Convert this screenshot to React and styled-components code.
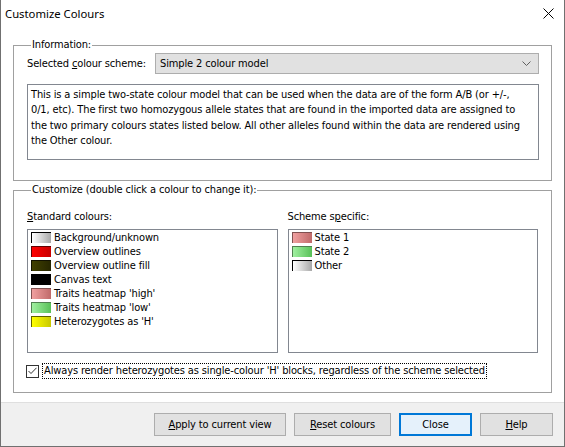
import React from 'react';
import styled, { createGlobalStyle } from 'styled-components';

const GlobalStyle = createGlobalStyle`
  html, body { margin: 0; padding: 0; background: #fff; }
  body {
    font-family: "DejaVu Sans Condensed", Tahoma, "Liberation Sans", sans-serif;
    font-size: 11px;
    letter-spacing: -0.13px;
    color: #000;
  }
  * { box-sizing: border-box; }
`;

const Window = styled.div`
  width: 565px;
  height: 447px;
  border: 1px solid #707070;
  border-top: none;
  background: #fff;
  display: flex;
  flex-direction: column;
`;

const TitleBar = styled.div`
  height: 30px;
  flex: none;
  display: flex;
  align-items: center;
  justify-content: space-between;
  padding: 0 10px 4px 4px;
`;

const Title = styled.div`
  font-family: "Noto Sans", "Open Sans", sans-serif;
  font-size: 11.3px;
  letter-spacing: 0;
`;

const Body = styled.div`
  flex: 1;
  padding: 8px 12px 9px 12px;
  display: flex;
  flex-direction: column;
  gap: 2px;
`;

const Group = styled.fieldset`
  margin: 0;
  padding: ${(p) => p.$pad};
  border: 1px solid #a0a0a0;
  min-width: 0;
`;

const Legend = styled.legend`
  margin-left: 4px;
  padding: 0 1px;
  line-height: 14px;
`;

const Row = styled.div`
  display: flex;
  align-items: center;
`;

const FieldLabel = styled.span`
  width: 128px;
  flex: none;
`;

const Combo = styled.div`
  flex: 1;
  height: 21px;
  border: 1px solid #adadad;
  background: #e1e1e1;
  display: flex;
  align-items: center;
  justify-content: space-between;
  padding: 0 7px 0 4px;
`;

const InfoText = styled.div`
  margin-top: 10px;
  height: 76px;
  border: 1px solid #828790;
  padding: 2px 3px;
  line-height: 15.4px;
  white-space: nowrap;
`;

const Columns = styled.div`
  display: grid;
  grid-template-columns: 1fr 1fr;
  column-gap: 10px;
`;

const Column = styled.div`
  display: flex;
  flex-direction: column;
`;

const ListLabel = styled.div`
  line-height: 14px;
  margin-bottom: 5px;
`;

const ListBox = styled.div`
  height: 124px;
  border: 1px solid #828790;
  background: #fff;
  padding: 0 3px;
`;

const Item = styled.div`
  height: 14px;
  display: flex;
  align-items: center;
  gap: 3px;
  white-space: nowrap;
`;

const Swatch = styled.span`
  width: 20px;
  height: 11px;
  flex: none;
  background: linear-gradient(to right, ${(p) => p.$from}, ${(p) => p.$to});
  border-left: 1px solid ${(p) => p.$edge};
  border-top: 1px solid ${(p) => p.$edge};
`;

const CheckRow = styled.div`
  margin-top: 11px;
  margin-left: -1px;
  display: flex;
  align-items: center;
  gap: 4px;
`;

const CheckBox = styled.span`
  width: 13px;
  height: 13px;
  border: 1px solid #333;
  background: #fff;
  display: flex;
  align-items: center;
  justify-content: center;
`;

const CheckLabel = styled.span`
  outline: 1px dotted #000;
  line-height: 14px;
  padding: 0 1px;
`;

const ButtonStrip = styled.div`
  height: 44px;
  flex: none;
  background: #f0f0f0;
  border-top: 1px solid #dfdfdf;
  display: flex;
  justify-content: flex-end;
  align-items: flex-start;
  gap: 8px;
  padding: 10px 11px 0 0;
`;

const Button = styled.div`
  width: ${(p) => p.$w}px;
  height: 23px;
  background: ${(p) => (p.$default ? '#e5f1fb' : '#e1e1e1')};
  border: ${(p) => (p.$default ? '2px solid #0078d7' : '1px solid #adadad')};
  display: flex;
  align-items: center;
  justify-content: center;
`;

const U = styled.span`
  text-decoration: underline;
  text-underline-offset: 1px;
`;

const standard = [
  { label: 'Background/unknown', from: '#ffffff', to: '#a8a8a8', edge: '#000000' },
  { label: 'Overview outlines', from: '#ff0000', to: '#c80000', edge: '#600000' },
  { label: 'Overview outline fill', from: '#404000', to: '#262600', edge: '#101000' },
  { label: 'Canvas text', from: '#000000', to: '#000000', edge: '#000000' },
  { label: "Traits heatmap 'high'", from: '#f0a0a0', to: '#c06a6a', edge: '#805050' },
  { label: "Traits heatmap 'low'", from: '#a0f0a0', to: '#58c058', edge: '#508050' },
  { label: "Heterozygotes as 'H'", from: '#ffff00', to: '#c8c800', edge: '#606000' },
];

const scheme = [
  { label: 'State 1', from: '#f0a0a0', to: '#c06a6a', edge: '#805050' },
  { label: 'State 2', from: '#a0f0a0', to: '#58c058', edge: '#508050' },
  { label: 'Other', from: '#ffffff', to: '#a8a8a8', edge: '#000000' },
];

const infoLines = [
  'This is a simple two-state colour model that can be used when the data are of the form A/B (or +/-,',
  '0/1, etc). The first two homozygous allele states that are found in the imported data are assigned to',
  'the two primary colours states listed below. All other alleles found within the data are rendered using',
  'the Other colour.',
];

function ColourList({ items }) {
  return (
    <ListBox>
      {items.map((it) => (
        <Item key={it.label}>
          <Swatch $from={it.from} $to={it.to} $edge={it.edge} />
          {it.label}
        </Item>
      ))}
    </ListBox>
  );
}

export default function App() {
  return (
    <>
      <GlobalStyle />
      <Window>
        <TitleBar>
          <Title>Customize Colours</Title>
          <svg width="11" height="11" viewBox="0 0 11 11">
            <path d="M0.5 0.5 L10.5 10.5 M10.5 0.5 L0.5 10.5" stroke="#000" strokeWidth="1" />
          </svg>
        </TitleBar>
        <Body>
          <Group $pad="1px 12px 20px 13px">
            <Legend>Information:</Legend>
            <Row>
              <FieldLabel>
                Selected <U>c</U>olour scheme:
              </FieldLabel>
              <Combo>
                <span>Simple 2 colour model</span>
                <svg width="9" height="5" viewBox="0 0 9 5">
                  <path d="M0.5 0.5 L4.5 4.5 L8.5 0.5" stroke="#606060" fill="none" strokeWidth="1" />
                </svg>
              </Combo>
            </Row>
            <InfoText>
              {infoLines.map((line, i) => (
                <React.Fragment key={i}>
                  {line}
                  {i < infoLines.length - 1 && <br />}
                </React.Fragment>
              ))}
            </InfoText>
          </Group>
          <Group $pad="13px 13px 14px 13px">
            <Legend>Customize (double click a colour to change it):</Legend>
            <Columns>
              <Column>
                <ListLabel>
                  <U>S</U>tandard colours:
                </ListLabel>
                <ColourList items={standard} />
              </Column>
              <Column>
                <ListLabel>
                  Scheme s<U>p</U>ecific:
                </ListLabel>
                <ColourList items={scheme} />
              </Column>
            </Columns>
            <CheckRow>
              <CheckBox>
                <svg width="9" height="8" viewBox="0 0 9 8">
                  <path d="M0.5 4 L3 6.5 L8.5 0.8" stroke="#333" fill="none" strokeWidth="1" />
                </svg>
              </CheckBox>
              <CheckLabel>Always render heterozygotes as single-colour 'H' blocks, regardless of the scheme selected</CheckLabel>
            </CheckRow>
          </Group>
        </Body>
        <ButtonStrip>
          <Button $w={132}>
            <span>
              <U>A</U>pply to current view
            </span>
          </Button>
          <Button $w={97}>
            <span>
              <U>R</U>eset colours
            </span>
          </Button>
          <Button $w={73} $default>
            Close
          </Button>
          <Button $w={73}>
            <span>
              <U>H</U>elp
            </span>
          </Button>
        </ButtonStrip>
      </Window>
    </>
  );
}
